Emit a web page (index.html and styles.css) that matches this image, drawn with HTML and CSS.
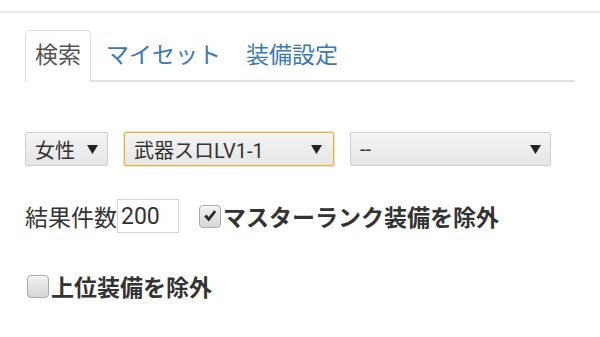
FILE: index.html
```html
<!DOCTYPE html>
<html lang="ja">
<head>
<meta charset="utf-8">
<title>検索</title>
<link rel="stylesheet" href="styles.css">
</head>
<body>
<div class="topbar"></div>
<div class="container">
  <ul class="tabs">
    <li class="tab active">検索</li>
    <li class="tab"><a href="#">マイセット</a></li>
    <li class="tab"><a href="#">装備設定</a></li>
  </ul>

  <div class="row selects">
    <div class="sel sel-sex"><span class="sel-text">女性</span><svg class="arrow" width="11" height="10" viewBox="0 0 11 10"><polygon points="0,1 11,1 5.5,10" fill="#222"/></svg></div>
    <div class="sel sel-slot focused"><span class="sel-text">武器スロLV1-1</span><svg class="arrow" width="11" height="10" viewBox="0 0 11 10"><polygon points="0,1 11,1 5.5,10" fill="#222"/></svg></div>
    <div class="sel sel-other"><span class="sel-text">--</span><svg class="arrow" width="11" height="10" viewBox="0 0 11 10"><polygon points="0,1 11,1 5.5,10" fill="#222"/></svg></div>
  </div>

  <div class="row options">
    <label class="count">結果件数<input class="num" type="text" value="200"></label>
    <label class="check check-master"><span class="box"><svg width="16" height="16" viewBox="0 0 16 16"><path d="M2.2 8.6 L4.6 6.6 L6.6 9.2 L12.2 2.2 L14.2 4 L6.8 13.4 Z" fill="#2a2a2a"/></svg></span>マスターランク装備を除外</label>
  </div>

  <div class="row last">
    <label class="check"><span class="box"></span>上位装備を除外</label>
  </div>
</div>
</body>
</html>
```

FILE: styles.css
```css
html, body {
  margin: 0;
  padding: 0;
  background: #ffffff;
}

body {
  font-family: Roboto, "Noto Sans CJK JP", sans-serif;
  font-size: 23px;
  color: #333333;
}

.topbar {
  height: 11px;
  border-bottom: 2px solid #e8e8e8;
}

.container {
  padding: 17px 25px 0;
}

.tabs {
  list-style: none;
  margin: 0;
  padding: 0;
  display: flex;
  border-bottom: 2px solid #e2e2e2;
}

.tab {
  box-sizing: border-box;
  height: 52px;
  line-height: 50px;
  padding: 0 9px;
  margin-right: 5px;
  margin-bottom: -2px;
  border: 1px solid transparent;
  border-bottom: none;
  border-radius: 5px 5px 0 0;
}

.tab a {
  color: #3a78b4;
  text-decoration: none;
}

.tab.active {
  color: #555555;
  background: #ffffff;
  border-color: #dddddd;
}

.row {
  display: flex;
  align-items: center;
}

.selects {
  margin-top: 50px;
  gap: 16px;
}

.sel {
  box-sizing: border-box;
  height: 34px;
  display: flex;
  align-items: center;
  justify-content: space-between;
  padding: 0 9px 0 9px;
  font-size: 20px;
  color: #333333;
  background: linear-gradient(#f4f4f4, #e6e6e6);
  border: 1px solid #cfcfcf;
  border-radius: 2px;
}

.sel-sex { width: 83px; }
.sel-slot { width: 210px; padding-right: 11px; }
.sel-other { width: 201px; }

.sel.focused {
  border-color: #e6ad45;
  box-shadow: 0 0 0 1px rgba(240, 190, 100, 0.45);
}

.arrow {
  display: block;
  flex: none;
}

.options {
  margin-top: 33px;
  height: 34px;
}

.count {
  display: flex;
  align-items: center;
}

.num {
  box-sizing: border-box;
  width: 62px;
  height: 34px;
  margin: 0;
  padding: 0 3px;
  font-family: Roboto, "Noto Sans CJK JP", sans-serif;
  font-size: 23px;
  color: #333333;
  border: 1px solid #d4d4d4;
  border-radius: 0;
  background: #ffffff;
  outline: none;
}

.check {
  display: flex;
  align-items: center;
  font-weight: bold;
  font-size: 23px;
  color: #333333;
}

.check-master {
  margin-left: 20px;
}

.box {
  box-sizing: border-box;
  width: 22px;
  height: 23px;
  margin-right: 2px;
  display: flex;
  align-items: center;
  justify-content: center;
  border: 1px solid #a9a9a9;
  border-radius: 4px;
  background: linear-gradient(#f2f2f2, #d6d6d6);
  box-shadow: inset 0 1px 0 rgba(255, 255, 255, 0.7);
}

.last {
  margin-top: 36px;
  height: 34px;
}

.last .check {
  margin-left: 2px;
}
```
